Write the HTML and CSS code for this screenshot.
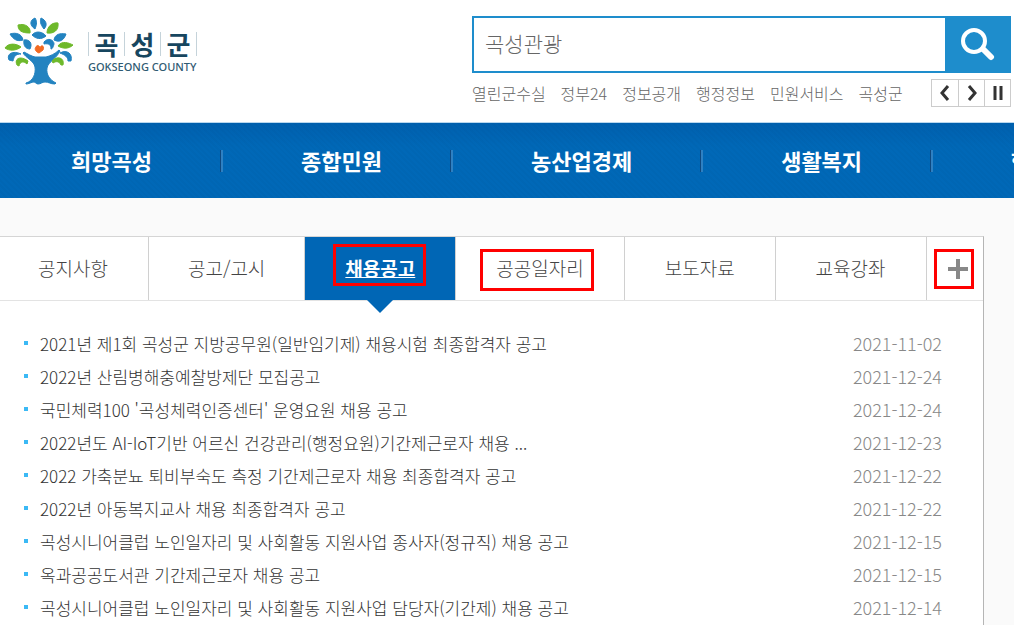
FILE: index.html
```html
<!DOCTYPE html>
<html lang="ko">
<head>
  <meta charset="UTF-8">
  <meta name="viewport" content="width=device-width, initial-scale=1">
  <title>곡성군</title>
  <link rel="stylesheet" href="styles.css">
</head>
<body>

  <header class="header">
    <a href="#" class="logo">
      <svg class="logo-tree" viewBox="0 0 80 78" aria-hidden="true">
        <g fill="#2383c0" stroke="#2383c0" stroke-linejoin="round">
          <path d="M24 40 C28 42 31 44 35 45 L46 45 C50 44 55 42 59 38 L60 39 C57 46 48 50 47 56 C46 63 50 68 56 71 L55 72 C50 72 49 70 45 70 C42 70 41 72 38 72 C36 72 36 70 33 70 C30 71 28 72 26 72 L26 71 C33 69 36 62 35 55 C34 49 26 46 23 41 Z"/>
          <path d="M35 6 C30 8 29 13 35 17 C37 12 37 9 35 6 Z"/>
          <path d="M41 6 C46 8 48 13 44 17 C40 12 40 9 41 6 Z"/>
          <path d="M10 22 C16 20 22 22 23 28 C17 30 13 27 10 22 Z"/>
          <path d="M54 28 C55 22 60 21 66 22 C64 28 60 31 54 28 Z"/>
          <path d="M32 23 C36 18 43 20 46 24 C41 28 36 27 32 23 Z"/>
          <path d="M24 28 C29 27 33 31 30 37 C26 37 23 34 24 28 Z"/>
          <path d="M44 30 C48 25 54 28 54 32 C53 36 52 37 51 37 C51 33 49 31 44 32 Z"/>
          <path d="M9 48 C6 42 13 38 21 42 C16 42 14 44 13 49 Z"/>
          <path d="M60 41 C67 37 73 42 71 49 L68 49 C68 45 65 43 60 41 Z"/>
        </g>
        <g fill="#6eb92b" stroke="#6eb92b" stroke-linejoin="round">
          <path d="M18 13 C25 11 31 15 30 21 C22 21 18 19 18 13 Z"/>
          <path d="M47 21 C47 15 52 10 58 11 C59 18 54 22 47 21 Z"/>
          <path d="M5 36 C8 31 16 31 21 35 C16 39 9 39 5 36 Z"/>
          <path d="M58 34 C62 28 69 31 73 33 C69 37 63 37 58 34 Z"/>
          <path d="M17 53 C14 47 20 43 28 49 L27 52 C24 49 20 49 19 54 Z"/>
          <path d="M52 49 C57 43 65 46 63 53 L61 53 C59 49 56 49 53 51 Z"/>
        </g>
        <path fill="#f26a21" stroke="#f26a21" d="M36 35 C37 32 40 34 40 36 C41 32 45 34 43 38 L39 41 C36 40 34 37 36 35 Z"/>
      </svg>
      <span class="logo-text">
        <span class="logo-name"><b>곡</b><b>성</b><b>군</b></span>
        <span class="logo-sub">GOKSEONG COUNTY</span>
      </span>
    </a>

    <div class="search-area">
      <form class="search">
        <input type="text" class="search-input" placeholder="곡성관광" aria-label="검색어">
        <button type="submit" class="search-btn" aria-label="검색">
          <svg width="36" height="36" viewBox="0 0 36 36" fill="none" stroke="#fff" aria-hidden="true">
            <circle cx="15" cy="14" r="11" stroke-width="4"/>
            <path d="M24 22 L32 30" stroke-width="6" stroke-linecap="round"/>
          </svg>
        </button>
      </form>
      <div class="keywords">
        <a href="#">열린군수실</a>
        <a href="#">정부24</a>
        <a href="#">정보공개</a>
        <a href="#">행정정보</a>
        <a href="#">민원서비스</a>
        <a href="#">곡성군</a>
        <div class="pager">
          <button type="button" aria-label="이전"><svg width="12" height="18" viewBox="0 0 12 18"><path d="M9 2 L3 9 L9 16" fill="none" stroke="#333" stroke-width="3"/></svg></button>
          <button type="button" aria-label="다음"><svg width="12" height="18" viewBox="0 0 12 18"><path d="M3 2 L9 9 L3 16" fill="none" stroke="#333" stroke-width="3"/></svg></button>
          <button type="button" aria-label="정지"><svg width="12" height="18" viewBox="0 0 12 18"><path d="M3 2 V16 M9 2 V16" fill="none" stroke="#333" stroke-width="3"/></svg></button>
        </div>
      </div>
    </div>
  </header>

  <nav class="nav">
    <a href="#">희망곡성</a>
    <a href="#">종합민원</a>
    <a href="#">농산업경제</a>
    <a href="#">생활복지</a>
    <a href="#">행정정보</a>
  </nav>

  <main class="board">
    <div class="tabs">
      <a href="#" class="tab">공지사항</a>
      <a href="#" class="tab tab-notice">공고/고시</a>
      <a href="#" class="tab active mark">채용공고</a>
      <a href="#" class="tab mark mark-wide">공공일자리</a>
      <a href="#" class="tab">보도자료</a>
      <a href="#" class="tab">교육강좌</a>
      <a href="#" class="tab more mark mark-more" aria-label="더보기">
        <svg width="20" height="20" viewBox="0 0 20 20"><path d="M10 0 V20 M0 10 H20" stroke="#888" stroke-width="4"/></svg>
      </a>
    </div>

    <ul class="list">
      <li><a href="#">2021년 제1회 곡성군 지방공무원(일반임기제) 채용시험 최종합격자 공고</a><span class="date">2021-11-02</span></li>
      <li><a href="#">2022년 산림병해충예찰방제단 모집공고</a><span class="date">2021-12-24</span></li>
      <li><a href="#">국민체력100 '곡성체력인증센터' 운영요원 채용 공고</a><span class="date">2021-12-24</span></li>
      <li><a href="#">2022년도 AI-IoT기반 어르신 건강관리(행정요원)기간제근로자 채용 ...</a><span class="date">2021-12-23</span></li>
      <li><a href="#">2022 가축분뇨 퇴비부숙도 측정 기간제근로자 채용 최종합격자 공고</a><span class="date">2021-12-22</span></li>
      <li><a href="#">2022년 아동복지교사 채용 최종합격자 공고</a><span class="date">2021-12-22</span></li>
      <li><a href="#">곡성시니어클럽 노인일자리 및 사회활동 지원사업 종사자(정규직) 채용 공고</a><span class="date">2021-12-15</span></li>
      <li><a href="#">옥과공공도서관 기간제근로자 채용 공고</a><span class="date">2021-12-15</span></li>
      <li><a href="#">곡성시니어클럽 노인일자리 및 사회활동 지원사업 담당자(기간제) 채용 공고</a><span class="date">2021-12-14</span></li>
    </ul>
  </main>

</body>
</html>
```
FILE: styles.css
```css
*,
*::before,
*::after {
  box-sizing: border-box;
}

body {
  display: flex;
  flex-direction: column;
  min-height: 100vh;
  margin: 0;
  background: #fafafa;
  color: #333;
  font-family: "Noto Sans CJK KR", sans-serif;
  font-weight: 300;
  overflow-x: hidden;
}

a {
  color: inherit;
  text-decoration: none;
}

button {
  padding: 0;
  border: 0;
  cursor: pointer;
}

/* header */
.header {
  display: flex;
  justify-content: space-between;
  align-items: flex-start;
  padding: 16px 3px 15px 0;
  background: #fff;
  border-bottom: 1px solid #b9d7ee;
}

.logo {
  display: flex;
  align-items: flex-start;
  color: #17465f;
}

.logo-tree {
  width: 80px;
  height: 78px;
  margin-top: -4px;
}

.logo-text {
  padding: 16px 0 0 8px;
}

.logo-name {
  display: flex;
  border-left: 1px solid #c5d3da;
}

.logo-name b {
  width: 36px;
  border-right: 1px solid #c5d3da;
  font-size: 26px;
  font-weight: 700;
  line-height: 24px;
  text-align: center;
}

.logo-sub {
  display: block;
  margin-top: 3px;
  color: #2f5a72;
  font-family: "Noto Sans", sans-serif;
  font-size: 11px;
  font-weight: 500;
  line-height: 16px;
  white-space: nowrap;
}

.search-area {
  width: 539px;
}

.search {
  display: flex;
  height: 57px;
  border: 2px solid #1e8dcc;
}

.search-input {
  flex: 1;
  min-width: 0;
  padding: 0 11px 3px;
  border: 0;
  font: inherit;
  font-size: 21px;
}

.search-input::placeholder {
  color: #666;
}

.search-btn {
  display: flex;
  align-items: center;
  justify-content: center;
  width: 64px;
  background: #1e8dcc;
}

.keywords {
  display: flex;
  align-items: center;
  gap: 15px;
  margin-top: 6px;
  color: #666;
  font-size: 16px;
  line-height: 28px;
  white-space: nowrap;
}

.pager {
  display: flex;
  margin-left: auto;
  border: 1px solid #ccc;
}

.pager button {
  display: flex;
  align-items: center;
  justify-content: center;
  width: 26px;
  height: 26px;
  background: #fff;
}

.pager button + button {
  border-left: 1px solid #ccc;
}

/* main menu */
.nav {
  display: flex;
  height: 75px;
  background:
    repeating-linear-gradient(45deg, rgba(0, 0, 0, 0.02) 0 2px, transparent 2px 4px),
    linear-gradient(#0060ae, #0068b7 24px);
  color: #fff;
  font-size: 22px;
  font-weight: 700;
  line-height: 75px;
  white-space: nowrap;
  overflow: hidden;
}

.nav a {
  display: flex;
  flex: none;
  align-items: center;
  padding-left: 78px;
}

.nav a:first-child {
  padding-left: 71px;
}

.nav a::after {
  content: "";
  width: 3px;
  height: 22px;
  margin-left: 68px;
  background: #2e80c2;
  border-left: 1px solid #0d4880;
}

/* board */
.board {
  flex: 1;
  margin: 38px 30px 0 0;
  background: #fff;
  border-top: 1px solid #d5d5d5;
  border-right: 1px solid #b5b5b5;
}

.tabs {
  display: flex;
  height: 64px;
  border-bottom: 1px solid #e3e3e3;
  color: #444;
  font-size: 19px;
  line-height: 62px;
  white-space: nowrap;
}

.tab {
  position: relative;
  padding: 0 40px;
  border-right: 1px solid #d0d0d0;
}

.tab:first-child {
  padding-left: 38px;
}

.tab-notice {
  padding: 0 39px;
}

.tab.active {
  background: #0066b5;
  color: #fff;
  font-weight: 700;
  text-decoration: underline;
}

.tab.active::before {
  content: "";
  position: absolute;
  top: 100%;
  left: 50%;
  margin-left: -13px;
  border: 13px solid transparent;
  border-top-color: #0066b5;
  border-bottom: 0;
}

.tab.more {
  display: flex;
  flex: 1;
  align-items: center;
  justify-content: center;
  padding: 0 0 0 6px;
  border-right: 0;
}

/* red highlight frames */
.mark::after {
  content: "";
  position: absolute;
  top: 7px;
  left: 28px;
  right: 29px;
  height: 42px;
  border: 3px solid #f00;
}

.mark-wide::after {
  top: 12px;
  left: 24px;
  right: 30px;
}

.mark-more::after {
  top: 12px;
  left: 7px;
  right: 9px;
  height: 40px;
}

.list {
  margin: 0;
  padding: 26px 41px 0 24px;
  list-style: none;
  font-size: 17px;
  line-height: 33px;
}

.list li {
  display: flex;
  align-items: center;
}

.list li::before {
  content: "";
  width: 4px;
  height: 4px;
  margin: 0 12px 2px 0;
  background: #3bb9f5;
}

.date {
  margin-left: auto;
  color: #888;
  font-size: 18px;
}
```
